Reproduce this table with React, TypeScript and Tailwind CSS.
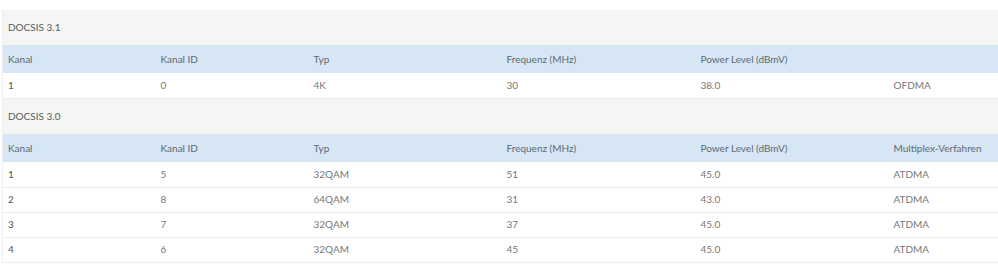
import React from "react";

const headers = ["Kanal", "Kanal ID", "Typ", "Frequenz (MHz)", "Power Level (dBmV)"];

const docsis31 = [["1", "0", "4K", "30", "38.0", "OFDMA"]];

const docsis30 = [
  ["1", "5", "32QAM", "51", "45.0", "ATDMA"],
  ["2", "8", "64QAM", "31", "43.0", "ATDMA"],
  ["3", "7", "32QAM", "37", "45.0", "ATDMA"],
  ["4", "6", "32QAM", "45", "45.0", "ATDMA"],
];

const Section = ({ title, head, rows, tall }: { title: string; head: string[]; rows: string[][]; tall?: boolean }) => (
  <>
    <tr className="bg-[#f5f5f3]">
      <td colSpan={6} className={`${tall ? "h-[35px]" : "h-[36px]"} px-[5px] text-[#5b5b5b] align-middle`}>
        {title}
      </td>
    </tr>
    <tr className="bg-[#d6e6f4] h-[28px]">
      {[0, 1, 2, 3, 4, 5].map((i) => (
        <th key={i} className="px-[5px] text-left font-normal text-[#5e6a76]">
          {head[i] ?? ""}
        </th>
      ))}
    </tr>
    {rows.map((r, ri) => (
      <tr key={ri} className="h-[25px] border-b border-[#ececec] bg-white">
        {r.map((v, i) => (
          <td key={i} className={`px-[5px] ${i === 0 ? "text-[#555]" : "text-[#777]"}`}>
            {v}
          </td>
        ))}
      </tr>
    ))}
  </>
);

export default function App() {
  return (
    <div className="w-[998px] h-[278px] bg-white pt-[10px] pl-[2px] font-['Lato','Liberation_Sans',sans-serif] text-[10px]">
      <table className="w-[996px] table-fixed border-collapse border-l border-[#eeeeee]">
        <colgroup>
          <col className="w-[153px]" />
          <col className="w-[153px]" />
          <col className="w-[193px]" />
          <col className="w-[194px]" />
          <col className="w-[193px]" />
          <col />
        </colgroup>
        <tbody>
          <Section title="DOCSIS 3.1" head={headers} rows={docsis31} tall />
          <Section title="DOCSIS 3.0" head={[...headers, "Multiplex-Verfahren"]} rows={docsis30} />
        </tbody>
      </table>
    </div>
  );
}
